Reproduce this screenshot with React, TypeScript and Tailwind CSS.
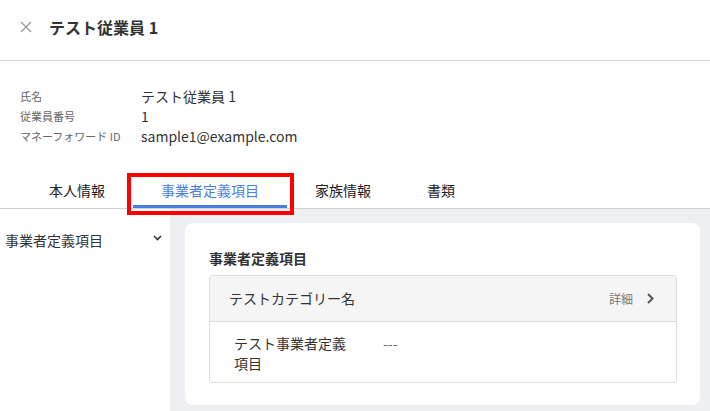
import React from "react";

const font = { fontFamily: '"Noto Sans CJK JP", "Noto Sans", sans-serif' };

const infoRows = [
  { label: "氏名", value: "テスト従業員 1" },
  { label: "従業員番号", value: "1" },
  { label: "マネーフォワード ID", value: "sample1@example.com" },
];

const tabs = ["本人情報", "事業者定義項目", "家族情報", "書類"];

export default function App() {
  return (
    <div
      className="relative w-[710px] h-[411px] overflow-hidden bg-white text-[#333]"
      style={font}
    >
      {/* header */}
      <div className="h-[61px] flex items-center border-b border-[#d6d6d6] pb-[6px]">
        <svg
          className="ml-[20px] w-[12px] h-[12px] text-[#999]"
          viewBox="0 0 12 12"
          fill="none"
          stroke="currentColor"
          strokeWidth="1.4"
        >
          <path d="M1 1l10 10M11 1L1 11" />
        </svg>
        <h1 className="ml-[17px] text-[16px] font-bold leading-none text-[#333]">
          テスト従業員 1
        </h1>
      </div>

      {/* info */}
      <div className="pt-[25px] pl-[20px]">
        {infoRows.map((r) => (
          <div key={r.label} className="flex items-center h-[20px]">
            <span className="w-[121px] text-[11px] text-[#666]">{r.label}</span>
            <span className="text-[14px] text-[#333]">{r.value}</span>
          </div>
        ))}
      </div>

      {/* tabs */}
      <div className="mt-[26px] flex pl-[21px] border-b border-[#d0d0d0]">
        {tabs.map((t, i) => (
          <div
            key={t}
            className={
              i === 1
                ? "h-[36px] px-[28px] flex items-center text-[14px] text-[#4a7de0] border-b-[3px] border-[#4a7de0] pt-[3px]"
                : "h-[36px] px-[28px] flex items-center text-[14px] text-[#222] border-b-[3px] border-transparent pt-[3px]"
            }
          >
            {t}
          </div>
        ))}
      </div>

      {/* body */}
      <div className="flex h-[202px]">
        <div className="w-[170px] shrink-0 bg-white pt-[21px] pl-[5px] pr-[8px]">
          <div className="flex items-center justify-between">
            <span className="text-[14px] text-[#333]">事業者定義項目</span>
            <svg
              className="w-[9px] h-[6px] text-[#333] mb-[6px]"
              viewBox="0 0 9 6"
              fill="none"
              stroke="currentColor"
              strokeWidth="1.6"
            >
              <path d="M1 1l3.5 3.5L8 1" />
            </svg>
          </div>
        </div>
        <div className="flex-1 bg-[#eeeff2] pt-[14px] pl-[15px] pr-[10px]">
          <div className="bg-white rounded-[8px] h-[182px] pt-[25px] px-[24px] pr-[23px]">
            <h2 className="text-[14px] font-bold leading-[20px] text-[#333] mb-[7px]">
              事業者定義項目
            </h2>
            <div className="border border-[#dcdcdc] rounded-[3px]">
              <div className="h-[46px] bg-[#f5f5f5] flex items-center justify-between pl-[19px] pr-[22px] border-b border-[#dcdcdc]">
                <span className="text-[14px] text-[#333]">テストカテゴリー名</span>
                <div className="flex items-center gap-[14px]">
                  <span className="text-[12px] text-[#777]">詳細</span>
                  <svg
                    className="w-[7px] h-[11px] text-[#555]"
                    viewBox="0 0 7 11"
                    fill="none"
                    stroke="currentColor"
                    strokeWidth="2"
                  >
                    <path d="M1 1l4.5 4.5L1 10" />
                  </svg>
                </div>
              </div>
              <div className="flex pl-[24px] pt-[11px] pb-[9px]">
                <span className="w-[117px] text-[14px] leading-[20px] text-[#333]">
                  テスト事業者定義項目
                </span>
                <span className="ml-[32px] text-[14px] leading-[20px] text-[#666]">---</span>
              </div>
            </div>
          </div>
        </div>
      </div>

      {/* annotation */}
      <div className="absolute left-[127px] top-[173px] w-[167px] h-[42px] border-[4px] border-[#ff0000] pointer-events-none" />
    </div>
  );
}
